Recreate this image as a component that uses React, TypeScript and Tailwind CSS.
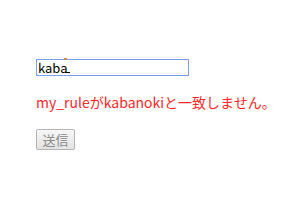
import React from 'react';

export default function App() {
  return (
    <div className="w-[300px] h-[206px] bg-white pt-[59px] pl-[36px] font-['Noto_Sans_CJK_JP',sans-serif]">
      <div className="relative w-[153px] h-[17px] border border-[#7da2f0] bg-white flex items-center pl-[1px]">
        <span className="text-[13px] leading-none text-black">kaba</span>
        <span className="absolute left-[28px] top-[12px] w-[5px] h-[1px] bg-black" />
        <span className="absolute left-[27px] top-[-2px] w-[3px] h-[2px] bg-[#d08a3c]" />
      </div>
      <p className="mt-[17px] text-[14px] leading-[18px] text-[#ff2a2a] whitespace-nowrap">
        my_ruleがkabanokiと一致しません。
      </p>
      <button className="mt-[18px] w-[39px] h-[21px] border border-[#b5b5b5] rounded-[2px] bg-gradient-to-b from-[#f6f6f6] to-[#e3e3e3] text-[13px] leading-none text-[#8a8a8a]">
        送信
      </button>
    </div>
  );
}
